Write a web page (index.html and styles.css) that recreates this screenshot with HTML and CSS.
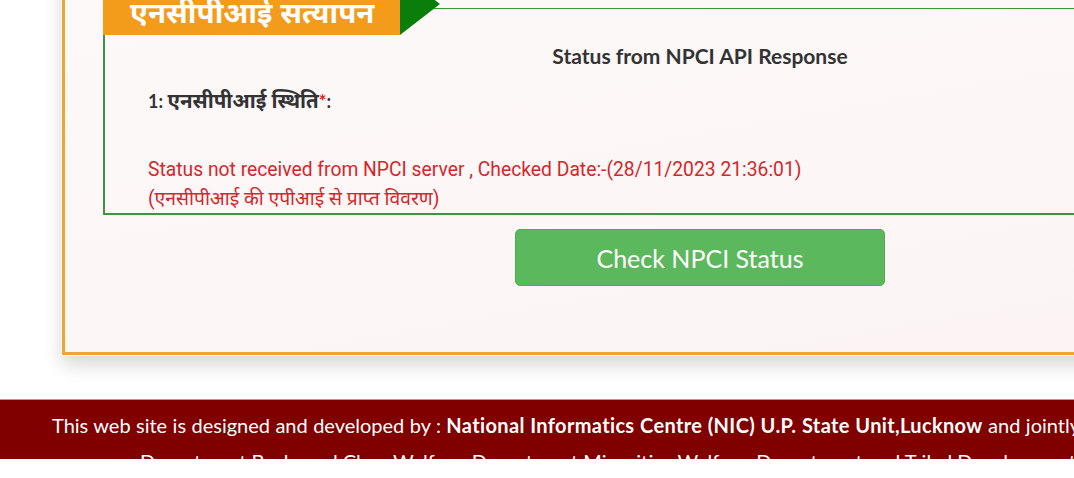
FILE: index.html
```html
<!DOCTYPE html>
<html lang="hi">
<head>
<meta charset="utf-8">
<title>NPCI सत्यापन</title>
<link rel="stylesheet" href="styles.css">
</head>
<body>
<div class="page">
  <main class="main">
    <section class="card">
      <div class="box">
        <div class="legend">
          <span class="legend-tab">एनसीपीआई सत्यापन</span>
          <span class="legend-arrow"></span>
        </div>
        <h2 class="box-title">Status from NPCI API Response</h2>
        <div class="field-label">1: <span class="hi">एनसीपीआई स्थिति</span><span class="req">*</span>:</div>
        <div class="status-msg">
          <div>Status not received from NPCI server , Checked Date:-(28/11/2023 21:36:01)</div>
          <div>(एनसीपीआई की एपीआई से प्राप्त विवरण)</div>
        </div>
      </div>
      <div class="actions">
        <button class="btn-check" type="button">Check NPCI Status</button>
      </div>
    </section>
  </main>
  <footer class="footer">
    <div class="footer-line first">This web site is designed and developed by : <b>National Informatics Centre (NIC) U.P. State Unit,Lucknow</b> and jointly owned by</div>
    <div class="footer-line second">Department Backward Class Welfare, Department Minorities Welfare, Department and Tribal Development Department</div>
  </footer>
</div>
</body>
</html>
```

FILE: styles.css
```css
html, body {
  margin: 0;
  padding: 0;
  background: #ffffff;
}
body {
  width: 1074px;
  height: 478px;
  overflow: hidden;
  font-family: Lato, "Noto Sans", sans-serif;
}
.page {
  display: flex;
  flex-direction: column;
  width: 1074px;
}
.main {
  height: 399px;
}
.card {
  box-sizing: border-box;
  margin-top: -40px;
  margin-left: 62px;
  width: 1276px;
  height: 395px;
  border: 3px solid #efa531;
  background: linear-gradient(170deg, #fdf9f9 0%, #fcf6f6 60%, #fbf3f3 100%);
  box-shadow: 0 0 0 1px #ffffff, 0 10px 18px rgba(0, 0, 0, 0.16);
  padding: 45px 38px 0 38px;
}
.box {
  position: relative;
  box-sizing: border-box;
  width: 1194px;
  height: 207px;
  border: 2px solid #3d953d;
  border-top-width: 1.5px;
  padding: 35px 0 0 43px;
}
.legend {
  position: absolute;
  left: -2px;
  top: -22px;
  display: flex;
  align-items: stretch;
}
.legend-tab {
  display: block;
  box-sizing: border-box;
  width: 297px;
  height: 48px;
  padding: 7px 0 0 27px;
  background: #f39c1b;
  color: #ffffff;
  font-family: "Noto Sans", Lato, sans-serif;
  font-weight: 700;
  font-size: 29.5px;
  line-height: 36px;
  white-space: nowrap;
}
.legend-arrow {
  display: block;
  width: 0;
  height: 0;
  margin-top: -14px;
  border-left: 40px solid #0b7d0b;
  border-top: 31px solid transparent;
  border-bottom: 31px solid transparent;
}
.box-title {
  margin: 0 0 0 -43px;
  text-align: center;
  font-family: Lato, "Noto Sans", sans-serif;
  font-weight: 700;
  font-size: 21px;
  line-height: 24px;
  color: #333333;
}
.field-label {
  margin-top: 20px;
  font-family: Lato, "Noto Sans", sans-serif;
  font-weight: 700;
  font-size: 18px;
  line-height: 24px;
  color: #333333;
}
.field-label .hi {
  font-size: 20.5px;
}
.req {
  color: #e02020;
}
.status-msg {
  margin-top: 42px;
  font-family: Roboto, "Noto Sans", sans-serif;
  font-size: 19.3px;
  line-height: 29px;
  color: #d0292b;
}
.actions {
  display: flex;
  justify-content: center;
  margin-top: 14px;
}
.btn-check {
  width: 370px;
  height: 57px;
  border: 1px solid #4cae4c;
  border-radius: 5px;
  background: #5cb85c;
  color: #ffffff;
  font-family: Lato, "Noto Sans", sans-serif;
  font-size: 25px;
  line-height: 30px;
  padding: 0;
}
.footer {
  height: 60px;
  overflow: hidden;
  background: #800000;
  border-top: 1px solid #c98f92;
  box-sizing: border-box;
  color: #ffffff;
  font-family: Lato, "Noto Sans", sans-serif;
  font-size: 20px;
  white-space: nowrap;
}
.footer-line {
  line-height: 36px;
}
.footer-line.first {
  margin-top: 7px;
  padding-left: 52px;
  word-spacing: 0.3px;
}
.footer-line.second {
  padding-left: 140px;
}
.footer b {
  font-weight: 700;
  letter-spacing: 0.35px;
}
```
